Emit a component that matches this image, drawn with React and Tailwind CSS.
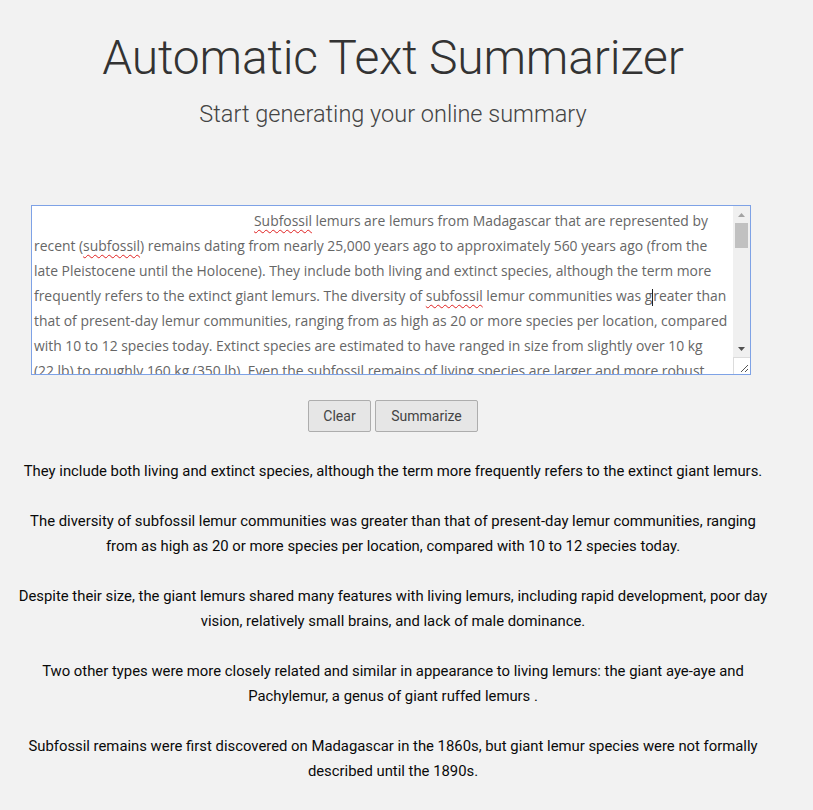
const lines = [
  [<Typo key="a">Subfossil</Typo>, " lemurs are lemurs from Madagascar that are represented by"],
  ["recent (", <Typo key="b">subfossil</Typo>, ") remains dating from nearly 25,000 years ago to approximately 560 years ago (from the"],
  ["late Pleistocene until the Holocene). They include both living and extinct species, although the term more"],
  ["frequently refers to the extinct giant lemurs. The diversity of ", <Typo key="c">subfossil</Typo>, " lemur communities was g", <Caret key="d" />, "reater than"],
  ["that of present-day lemur communities, ranging from as high as 20 or more species per location, compared"],
  ["with 10 to 12 species today. Extinct species are estimated to have ranged in size from slightly over 10 kg"],
  ["(22 lb) to roughly 160 kg (350 lb). Even the subfossil remains of living species are larger and more robust"],
];

const summary = [
  ["They include both living and extinct species, although the term more frequently refers to the extinct giant lemurs."],
  [
    "The diversity of subfossil lemur communities was greater than that of present-day lemur communities, ranging",
    "from as high as 20 or more species per location, compared with 10 to 12 species today.",
  ],
  [
    "Despite their size, the giant lemurs shared many features with living lemurs, including rapid development, poor day",
    "vision, relatively small brains, and lack of male dominance.",
  ],
  [
    "Two other types were more closely related and similar in appearance to living lemurs: the giant aye-aye and",
    "Pachylemur, a genus of giant ruffed lemurs .",
  ],
  [
    "Subfossil remains were first discovered on Madagascar in the 1860s, but giant lemur species were not formally",
    "described until the 1890s.",
  ],
];

function Typo({ children }) {
  return <span className="underline decoration-wavy decoration-[#e02020] decoration-1 underline-offset-[3px]">{children}</span>;
}

function Caret() {
  return <span className="inline-block h-[17px] w-px bg-[#222] align-middle" />;
}

function Scrollbar() {
  return (
    <div className="flex w-[17px] flex-col bg-[#f0f0f0]">
      <div className="flex h-[17px] items-center justify-center">
        <svg width="7" height="4" viewBox="0 0 7 4"><path d="M3.5 0 L7 4 L0 4 Z" fill="#a3a3a3" /></svg>
      </div>
      <div className="mx-[2px] h-[25px] bg-[#c1c1c1]" />
      <div className="flex-1" />
      <div className="flex h-[17px] items-center justify-center">
        <svg width="7" height="4" viewBox="0 0 7 4"><path d="M0 0 L7 0 L3.5 4 Z" fill="#505050" /></svg>
      </div>
      <div className="flex h-[17px] items-end justify-end border-t border-l border-[#dcdcdc] bg-white">
        <svg width="10" height="10" viewBox="0 0 10 10" className="mb-[1px] mr-[1px]">
          <path d="M9 2 L2 9 M9 6 L6 9" stroke="#555" strokeWidth="1" />
        </svg>
      </div>
    </div>
  );
}

export default function App() {
  return (
    <div className="min-h-[810px] bg-[#f2f2f2] font-['Roboto',sans-serif]">
      <div className="w-[786px] pt-[30px]">
        <h1 className="text-center text-[48px] leading-[56px] font-light tracking-[-0.2px] text-[#333]">
          Automatic Text Summarizer
        </h1>
        <h2 className="mt-[13px] text-center text-[23.5px] leading-[30px] font-light text-[#444]">
          Start generating your online summary
        </h2>

        <div className="mt-[76px] ml-[31px] flex h-[170px] w-[720px] border border-[#7ea2e6] bg-white">
          <div className="flex-1 overflow-hidden pl-[2px] pt-[2px] font-['Open_Sans',sans-serif] text-[13.9px] leading-[25px] text-[#666] whitespace-nowrap">
            {lines.map((line, i) => (
              <div key={i} className={i === 0 ? "pl-[220px]" : ""}>{line}</div>
            ))}
          </div>
          <Scrollbar />
        </div>

        <div className="mt-[25px] flex justify-center gap-[4px]">
          <button className="h-[32px] w-[63px] rounded-[2px] border border-[#adadad] bg-[#e6e6e6] text-[14px] text-[#444]">Clear</button>
          <button className="h-[32px] w-[103px] rounded-[2px] border border-[#adadad] bg-[#e6e6e6] text-[14px] text-[#444]">Summarize</button>
        </div>

        <div className="mt-[27px] text-center text-[14.85px] leading-[25px] text-[#0a0a0a]">
          {summary.map((para, i) => (
            <p key={i} className="mb-[25px]">
              {para.map((line, j) => (
                <span key={j} className="block">{line}</span>
              ))}
            </p>
          ))}
        </div>
      </div>
    </div>
  );
}
